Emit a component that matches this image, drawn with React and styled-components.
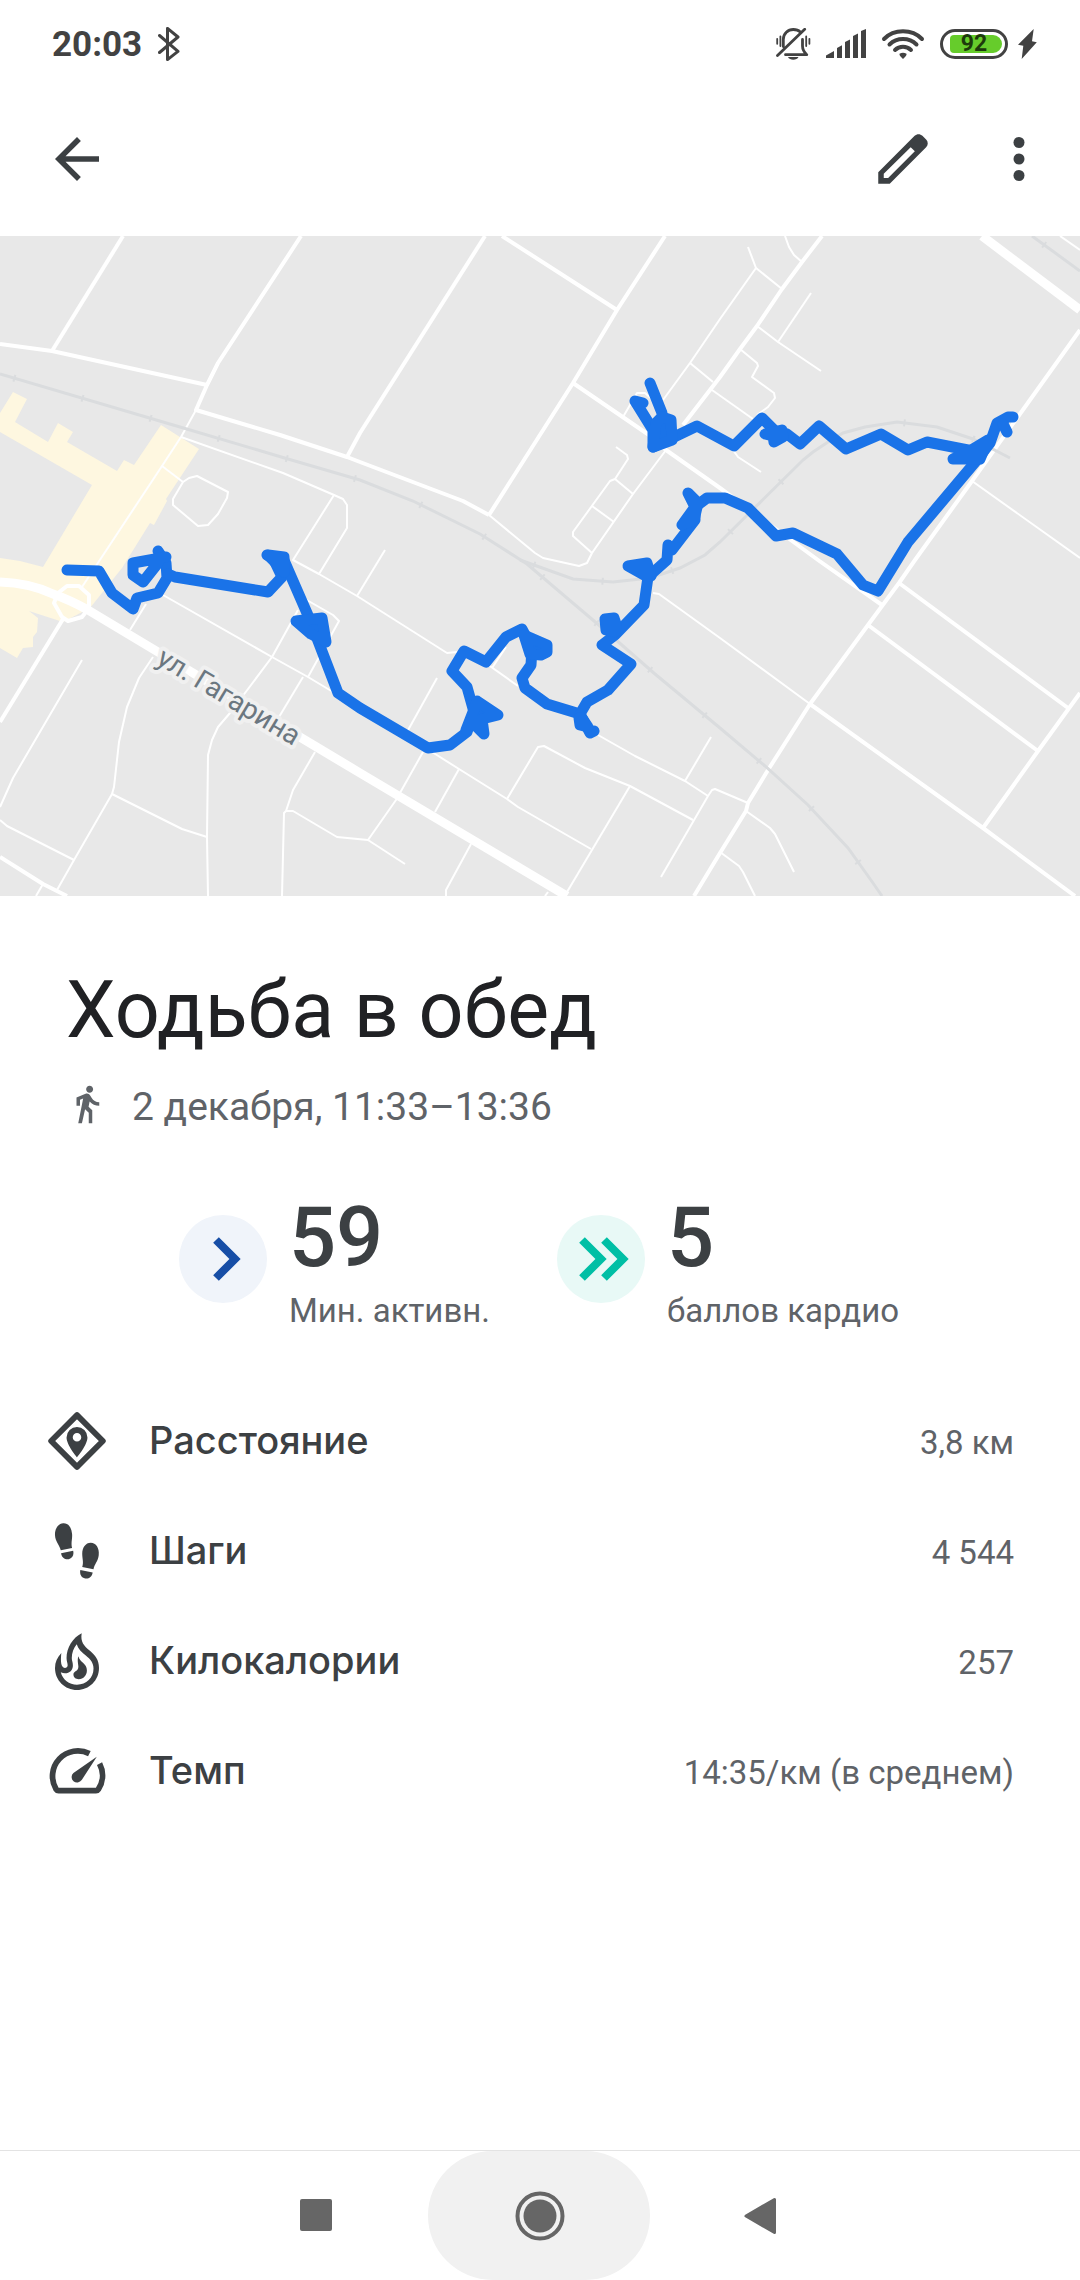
import styled, { createGlobalStyle } from "styled-components";


const minorRoads = [
    "M196 410L181 437L162 466L82 587",
    "M489 515L535 553L543 558L579 566L587 563L592 553L633 494L666 450",
    "M181 437L283 473L334 495L343 499L347 505V528L319 574",
    "M334 495L293 560L319 574L357 596L447 653L457 652",
    "M385 550L357 596",
    "M298 610L272 657L245 693L230 713L218 727L212 740L208 755L207 837L208 896",
    "M82 660L13 778L0 807",
    "M153 657L139 678L127 707L119 742L114 787L112 794L74 860L57 890",
    "M112 794L182 829L207 837",
    "M0 820L7 826L74 860",
    "M43 884L36 896",
    "M315 752L293 790L286 811L284 813L282 896",
    "M286 811H293L337 837L368 840L405 864",
    "M368 840L396 800L423 752",
    "M437 678L407 732",
    "M146 604L130 630",
    "M163 595L272 657L308 677L333 692",
    "M298 595L333 615L339 621L308 677",
    "M303 677L279 717",
    "M162 466L183 482L189 478L197 476L228 492L227 498L218 514L208 525L198 526L173 505V499L183 482",
    "M616 447L627 455L628 459L615 479L610 481L573 532V536L592 553",
    "M615 479L633 494",
    "M592 506L614 522",
    "M623 417L637 393H645L653 400",
    "M663 400L690 363L720 319L756 268L748 247",
    "M756 268L782 289",
    "M690 363L713 382",
    "M712 390L753 419",
    "M785 236L789 247L794 255L802 262",
    "M757 326L778 342L821 371",
    "M778 342L811 293",
    "M740 349L757 363L758 366L752 377L774 393L775 398L768 407L757 415",
    "M733 450L738 457L761 472",
    "M1060 236L1080 250",
    "M972 481L1080 558",
    "M653 593L659 594L720 638L810 704",
    "M661 877L708 796L712 790L715 789L748 803",
    "M746 811L770 828L775 834L794 872",
    "M720 852L739 866L743 872L755 896",
    "M487 664L518 686",
    "M492 668L506 647",
    "M598 735L635 756L685 781L708 796",
    "M711 737L685 781",
    "M432 752L459 769L507 799L518 807L591 849",
    "M459 769L435 812",
    "M507 799L535 752L538 747L544 746L585 768L630 786L693 820",
    "M630 786L567 892",
    "M471 844L446 890V896",
    "M548 892L545 896",
]

const roads = [
    "M123 236L52 351",
    "M0 344L52 351L207 385",
    "M301 236L218 363L207 385L196 410L280 435L347 457L360 462L463 501L489 515",
    "M347 457L360 433L485 236",
    "M502 236L617 310",
    "M665 236L617 310L573 383L489 515",
    "M573 383L649 435L666 450L720 488L818 560L882 605",
    "M822 236L802 262L782 289L757 326L740 349L720 377L683 425",
    "M1080 330L972 481L915 560L899 583L868 625L810 704L768 770L748 803L746 811L720 853L694 896",
    "M899 583L1068 708",
    "M868 625L1038 751",
    "M810 704L983 828L1075 896",
    "M1080 693L1038 751L983 828",
    "M63 619L0 722",
    "M0 857L43 884L67 896",
    "M67 586H79L89 595V608L82 617L68 621L62 617L54 603L58 593Z",
]

const highways = [
    "M0 582Q30 583 53 594Q70 600 88 610L153 649L360 773L567 896",
    "M982 236L1080 310",
]

const railways = [
    "M0 374L180 427L288 459L360 480L413 501L480 534L527 564L607 632L655 674L720 728L765 766L808 805L848 848L873 883L882 896",
    "M520 560L573 579L613 582L650 578L680 568L705 555L720 542L803 460L813 452L828 442L843 433L865 427L897 422L937 427L973 439L1010 458",
    "M1032 236L1080 271",
]

const track = [
    "M67 570L99 571L112 593L133 609L137 598L158 593L167 578L166 563L158 551",
    "M166 557L133 563V575L143 582L158 563",
    "M168 574L175 577L268 592L282 577L273 558L267 555",
    "M283 558L310 620L338 693L360 708L428 748L450 745L467 732L474 712L467 687L452 671L464 651L486 662L506 637L522 629L532 648L531 665L522 678L525 688L547 704L580 714L587 702L608 690L631 664L602 645L615 635L644 605L648 577L667 560L668 545L672 550L695 520V507L707 498L725 498L748 508L776 536L793 533L837 554L863 585L878 591L908 542L977 460L990 443L997 423L1008 417L1013 417",
    "M968 450L927 442L908 450L881 434L846 449L819 426L800 444L787 434L776 432L762 418L734 446L697 426L672 438L653 447V430L635 401L643 403",
    "M650 383L662 413",
    "M1003 424L1007 432",
    "M580 714L590 733L594 731",
]

// places where the track doubles back on itself
const knots = [
    "M268 555L284 557L284 572L276 563Z",
    "M296 621L322 618L326 642L311 634Z",
    "M477 701L498 715L482 719L484 734L472 722L466 730L473 712Z",
    "M524 635L547 645L547 652L541 655L530 654Z",
    "M582 718L588 727L580 725L579 718Z",
    "M605 619L614 618L616 624L615 632L606 630Z",
    "M628 566L647 563L651 576L644 575Z",
    "M688 493L698 503L694 520L682 525L695 507Z",
    "M653 447L672 440L671 420L662 417L656 423Z",
    "M765 434L782 430L783 437L774 442L773 436Z",
    "M953 459L980 459L988 440L968 452Z",
]


export default function App() {
    return (
        <>
            <GlobalStyle />
            <Screen>
                <StatusBar />
                <Toolbar>
                    <IconButton aria-label="Назад">
                        <Icon size={66} viewBox="0 0 24 24">
                            <path d="M20 11H7.83l5.59-5.59L12 4l-8 8 8 8 1.41-1.41L7.83 13H20v-2z" />
                        </Icon>
                    </IconButton>
                    <ToolbarActions>
                        <IconButton aria-label="Изменить">
                            <Icon size={66} viewBox="0 0 24 24">
                                <path fillRule="evenodd" d="M20.41 4.94l-1.35-1.35c-.78-.78-2.05-.78-2.83 0L3 16.82V21h4.18L20.41 7.77c.79-.78.79-2.05 0-2.83zM6.6 18.9H5v-1.5l9.8-9.7 1.5 1.5-9.7 9.7z" />
                            </Icon>
                        </IconButton>
                        <IconButton aria-label="Ещё">
                            <Icon size={66} viewBox="0 0 24 24">
                                <circle cx="12" cy="6" r="2" />
                                <circle cx="12" cy="12" r="2" />
                                <circle cx="12" cy="18" r="2" />
                            </Icon>
                        </IconButton>
                    </ToolbarActions>
                </Toolbar>
                <RouteMap />
                <Summary />
                <Metrics />
                <NavigationBar />
            </Screen>
        </>
    )
}


const StatusBar = () => {
    return (
        <StatusRow>
            <StatusGroup gap={16}>
                <Clock>20:03</Clock>
                <StatusIcon width="22" height="34" viewBox="0 0 22 34">
                    <path d="M1.5 8.5L20 24.4L9.5 32.6V1.4L20 10L1.5 25.5" strokeWidth="3" />
                </StatusIcon>
            </StatusGroup>
            <StatusGroup gap={15}>
                <StatusIcon width="35" height="33" viewBox="0 0 35 33">
                    <path d="M7.3 18.5V11.5C7.3 5.5 12 1.5 17.3 1.5C20 1.5 22.5 2.2 24 3.8M26.5 11.5V18C26.5 22 28 24 30.7 26.7H9.5M28.7 1.3L1.5 27.6" strokeWidth="2.8" />
                    <path d="M1.2 10.8V15.8M4.4 8.5V18M30.2 8.5V18M33.4 10.8V15.8" strokeWidth="1.8" />
                    <path d="M12 29H22.5C21 32.5 13.5 32.5 12 29Z" fill="currentColor" stroke="none" />
                </StatusIcon>
                <StatusIcon width="40" height="30" viewBox="0 0 40 30">
                    <path d="M0 29V26.5L8 22V29ZM11 29V19L16 16.3V29ZM19 29V13L24 10.5V29ZM27 29V7L32 4.5V29ZM35 29V2L40 0V29Z" fill="currentColor" stroke="none" />
                </StatusIcon>
                <StatusIcon width="44" height="30" viewBox="0 0 44 30">
                    <path d="M3 10C13 -.2 31 -.2 41 10M8.5 15.5C16 8.3 28 8.3 35.5 15.5M14 21C18.5 16.8 25.5 16.8 30 21" strokeWidth="4" />
                    <path d="M18.5 24.8Q22 22.8 25.5 24.8Q26 26.5 22 30Q18 26.5 18.5 24.8Z" fill="currentColor" stroke="none" />
                </StatusIcon>
                <BatteryGroup>
                    <Battery>
                        <BatteryLevel>92</BatteryLevel>
                    </Battery>
                    <StatusIcon width="19" height="30" viewBox="0 0 19 30">
                        <path d="M15.7 0L14 12.3L18.8 13.3L3.7 30L5.3 16.8L0 15.7Z" fill="currentColor" stroke="none" />
                    </StatusIcon>
                </BatteryGroup>
            </StatusGroup>
        </StatusRow>
    )
}


const RouteMap = () => {
    return (
        <MapCanvas viewBox="0 236 1080 660" role="img" aria-label="Маршрут">
            <rect y="236" width="1080" height="660" fill="#e8e8e8" />
            <path fill="#fef7e0" d="M13 392L27 399L15 422L48 442L58 423L73 432L67 442L117 471L124 460L134 465L161 425L199 449L166 499L167 501L154 525L150 523L122 568L90 608L63 622L29 611L38 618L37 632L33 637V647L23 648L17 658L0 648V558L20 561L43 567L92 485L0 432V413Z" />
            <g fill="none" stroke="#fff" strokeLinejoin="round">
                {minorRoads.map((d) => <path key={d} d={d} strokeWidth="2" />)}
                {roads.map((d) => <path key={d} d={d} strokeWidth="4" />)}
                {highways.map((d) => <path key={d} d={d} strokeWidth="9" />)}
            </g>
            <g fill="none" stroke="#dadcde">
                {railways.map((d) => <path key={d} d={d} strokeWidth="3" />)}
                {railways.map((d) => <path key={d} d={d} strokeWidth="7" strokeDasharray="2 69" strokeDashoffset="-14" />)}
            </g>
            <g fill="none" stroke="#1a73e8" strokeWidth="11" strokeLinejoin="round" strokeLinecap="round">
                {track.map((d) => <path key={d} d={d} />)}
                {knots.map((d) => <path key={d} d={d} fill="#1a73e8" />)}
            </g>
            <StreetName transform="translate(155 663) rotate(31)">ул. Гагарина</StreetName>
        </MapCanvas>
    )
}


const Summary = () => {
    return (
        <SummarySection>
            <Title>Ходьба в обед</Title>
            <Subtitle>
                <Icon size={42} viewBox="0 0 24 24">
                    <path d="M13.5 5.5c1.1 0 2-.9 2-2s-.9-2-2-2-2 .9-2 2 .9 2 2 2zM9.8 8.9L7 23h2.1l1.8-8 2.1 2v6h2v-7.5l-2.1-2 .6-3C14.8 12 16.8 13 19 13v-2c-1.9 0-3.5-1-4.3-2.4l-1-1.6c-.4-.6-1-1-1.7-1-.3 0-.5.1-.8.1L6 8.3V13h2V9.6l1.8-.7" />
                </Icon>
                <span>2 декабря, 11:33–13:36</span>
            </Subtitle>
            <Scores>
                <Score value="59" label="Мин. активн." color="#174ea6" background="#f0f4fa" chevrons={["M37 25L56 44L37 63"]} />
                <Score value="5" label="баллов кардио" color="#00bfa5" background="#e8f9f6" chevrons={["M25 25L44 44L25 63", "M47 25L66 44L47 63"]} />
            </Scores>
        </SummarySection>
    )
}


const Score = ({ value, label, color, background, chevrons }) => {
    return (
        <ScoreItem>
            <ScoreBadge viewBox="0 0 88 88" $background={background}>
                {chevrons.map((d) => <path key={d} d={d} fill="none" stroke={color} strokeWidth="8" />)}
            </ScoreBadge>
            <div>
                <ScoreValue>{value}</ScoreValue>
                <ScoreLabel>{label}</ScoreLabel>
            </div>
        </ScoreItem>
    )
}


const Metrics = () => {
    return (
        <MetricList>
            <Metric name="Расстояние" value="3,8 км">
                <path d="M12 2.6L21.4 12L12 21.4L2.6 12Z" fill="none" stroke="currentColor" strokeWidth="2.1" strokeLinejoin="round" />
                <path fillRule="evenodd" d="M12 6.9a3.8 3.8 0 0 0-3.8 3.8c0 2.7 3.8 7.2 3.8 7.2s3.8-4.5 3.8-7.2A3.8 3.8 0 0 0 12 6.9zm0 2.2a1.55 1.55 0 1 1 0 3.1a1.55 1.55 0 0 1 0-3.1z" />
            </Metric>
            <Metric name="Шаги" value="4 544">
                <path d="M7 1.9C5.1 2 3.9 4 4 6.3C4.1 8.5 5.6 9.8 6.1 11.7L10.2 10.9C9.7 9 10.4 7.7 10.2 5.7C10 3.5 8.9 1.8 7 1.9ZM6.2 12.8L10.6 11.9C11 13.5 10.3 14.7 9 15C7.6 15.2 6.5 14.4 6.2 12.8Z" />
                <path d="M17 9C15.1 9 13.9 10.8 13.9 13C13.9 14.9 14.5 16 13.9 17.8L18 18.6C18.3 16.8 19.7 15.6 19.9 13.5C20.2 11 18.9 9 17 9ZM13.2 18.9L17.7 19.8C17.4 21.4 16.3 22.2 15 22C13.6 21.7 12.9 20.5 13.2 18.9Z" />
            </Metric>
            <Metric name="Килокалории" value="257">
                <path fillRule="evenodd" d="M13.7 1.9C10.4 3.5 8.2 7.3 8.2 10.9C8.2 12 8.6 12.9 8.6 13.5C8.6 14.2 8.1 14.5 7.6 14.5C6.1 14.4 6 12.2 6.3 9.1C4.8 10.8 4 12.5 4 14.5C4 19 7.6 22.5 12 22.5S20 19 20 14.5C20 11.6 18.6 9.9 16.7 8.3C14.5 6.5 13.2 5 13.7 1.9ZM11.9 5.9C12.4 7.6 13.7 8.8 15.2 10C16.9 11.4 18 12.6 18 14.8C18 18 15.4 20.6 12 20.6C9.1 20.6 6.8 18.8 6.1 16.1C8.3 17.2 10.6 15.8 10.5 13.5C10.5 12.4 10.1 12 10.1 10.9C10.1 9 10.8 7.2 11.9 5.9Z" />
                <path d="M12.5 10.3C12 11.9 12.5 13 12.5 14.1C12.5 15.9 10.7 15.6 10.7 16.9C10.7 18 11.6 18.6 12.6 18.6C14.4 18.6 15.6 17.3 15.6 15.4C15.6 12.9 13.1 12.6 12.5 10.3Z" />
            </Metric>
            <Metric name="Темп" value="14:35/км (в среднем)">
                <path d="M16.5 5.7A9.2 9.2 0 0 0 4.4 18.6Q4.7 19.1 5.3 19.1H18.9Q19.5 19.1 19.8 18.6A9.2 9.2 0 0 0 20.2 9.3" fill="none" stroke="currentColor" strokeWidth="2.1" />
                <path d="M19.2 6.8L13.7 15.3A2 2 0 1 1 10.7 12.7Z" />
            </Metric>
        </MetricList>
    )
}


const Metric = ({ name, value, children }) => {
    return (
        <MetricRow>
            <Icon size={66} viewBox="0 0 24 24">{children}</Icon>
            <MetricText>
                <MetricName>{name}</MetricName>
                <MetricValue>{value}</MetricValue>
            </MetricText>
        </MetricRow>
    )
}


const NavigationBar = () => {
    return (
        <NavBar>
            <NavButton aria-label="Недавние">
                <Icon size={52} viewBox="0 0 52 52">
                    <rect x="9" y="9" width="32" height="32" rx="2" />
                </Icon>
            </NavButton>
            <NavButton aria-label="Домой" $pressed>
                <Icon size={52} viewBox="0 0 52 52">
                    <circle cx="27" cy="26" r="22.5" fill="none" stroke="currentColor" strokeWidth="4" />
                    <circle cx="27" cy="26" r="16.5" />
                </Icon>
            </NavButton>
            <NavButton aria-label="Назад">
                <Icon size={52} viewBox="0 0 52 52">
                    <path d="M39.5 9.5V42.5L11 26Z" stroke="currentColor" strokeWidth="3" strokeLinejoin="round" />
                </Icon>
            </NavButton>
        </NavBar>
    )
}


const GlobalStyle = createGlobalStyle`
    * {
        box-sizing: border-box;
    }
    body {
        margin: 0;
        background: #fff;
        color: #3c4043;
        font-family: Roboto, "Noto Sans", sans-serif;
    }
`

const Screen = styled.div`
    display: flex;
    flex-direction: column;
    min-height: 100vh;
`

const Icon = styled.svg.attrs(({ size }) => ({ width: size, height: size, "aria-hidden": true }))`
    display: block;
    flex: none;
    fill: currentColor;
`

const StatusRow = styled.header`
    display: flex;
    justify-content: space-between;
    align-items: center;
    height: 82px;
    padding: 6px 43px 0 52px;
    color: #424242;
`

const StatusGroup = styled.div`
    display: flex;
    align-items: center;
    gap: ${({ gap }) => gap}px;
`

const StatusIcon = styled.svg`
    display: block;
    fill: none;
    stroke: currentColor;
    stroke-linecap: round;
    stroke-linejoin: round;
`

const Clock = styled.span`
    padding-top: 2px;
    font-size: 35px;
    font-weight: 700;
    line-height: 40px;
`

const BatteryGroup = styled.div`
    display: flex;
    align-items: center;
    gap: 10px;
`

const Battery = styled.div`
    width: 68px;
    height: 30px;
    padding: 3px 3px 3px 7px;
    border: 3px solid #424242;
    border-radius: 15px;
`

const BatteryLevel = styled.div`
    height: 18px;
    padding-right: 4px;
    border-radius: 4px 9px 9px 4px;
    background: #66cc2b;
    color: #1d3a0c;
    font-size: 23px;
    font-weight: 700;
    line-height: 18px;
    text-align: center;
`

const Toolbar = styled.div`
    display: flex;
    justify-content: space-between;
    align-items: center;
    height: 154px;
    padding: 0 28px 0 44px;
`

const ToolbarActions = styled.div`
    display: flex;
    gap: 50px;
`

const IconButton = styled.button`
    padding: 0;
    border: 0;
    background: none;
    color: #3c4043;
    cursor: pointer;
`

const MapCanvas = styled.svg`
    display: block;
    width: 100%;
    height: auto;
`

const StreetName = styled.text`
    fill: #6b7780;
    stroke: #f0f0f0;
    stroke-width: 8px;
    stroke-linejoin: round;
    paint-order: stroke;
    font-size: 28px;
`

const SummarySection = styled.section`
    padding: 70px 68px 0 66px;
`

const Title = styled.h1`
    margin: 0;
    color: #202124;
    font-size: 79px;
    font-weight: 400;
    line-height: 88px;
`

const Subtitle = styled.div`
    display: flex;
    gap: 24px;
    margin-top: 29px;
    color: #5f6368;
    font-size: 39px;
    line-height: 48px;
`

const Scores = styled.div`
    display: flex;
    justify-content: center;
    gap: 67px;
    margin-top: 66px;
`

const ScoreItem = styled.div`
    display: flex;
    gap: 22px;
`

const ScoreBadge = styled.svg`
    width: 88px;
    height: 88px;
    margin-top: 18px;
    border-radius: 50%;
    background: ${({ $background }) => $background};
`

const ScoreValue = styled.div`
    font-size: 83px;
    font-weight: 500;
    line-height: 82px;
`

const ScoreLabel = styled.div`
    margin-top: 10px;
    color: #5f6368;
    font-size: 33px;
    line-height: 44px;
`

const MetricList = styled.dl`
    margin: 53px 0 0;
    padding: 0 66px 0 44px;
`

const MetricRow = styled.div`
    display: flex;
    align-items: center;
    gap: 39px;
    height: 110px;
`

const MetricText = styled.div`
    display: flex;
    flex: 1;
    justify-content: space-between;
    align-items: baseline;
    padding-bottom: 2px;
`

const MetricName = styled.dt`
    font-family: Inter, Roboto, sans-serif;
    font-size: 38px;
    font-weight: 500;
`

const MetricValue = styled.dd`
    margin: 0;
    color: #5f6368;
    font-size: 33px;
`

const NavBar = styled.nav`
    display: flex;
    justify-content: center;
    margin-top: auto;
    padding-right: 2px;
    border-top: 1px solid #e3e3e3;
`

const NavButton = styled.button`
    display: flex;
    justify-content: center;
    align-items: center;
    width: 222px;
    height: 129px;
    padding: 0;
    border: 0;
    border-radius: 65px;
    background: ${({ $pressed }) => $pressed ? "#f1f1f1" : "none"};
    color: #666;
    cursor: pointer;
`
